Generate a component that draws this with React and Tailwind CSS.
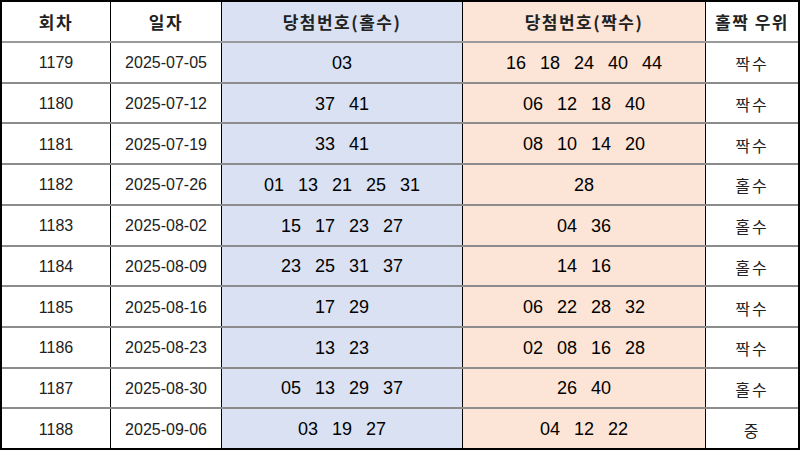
import React from 'react';

const rows = [
  { no: 1179, date: '2025-07-05', odd: ['03'], even: ['16', '18', '24', '40', '44'], win: '짝수' },
  { no: 1180, date: '2025-07-12', odd: ['37', '41'], even: ['06', '12', '18', '40'], win: '짝수' },
  { no: 1181, date: '2025-07-19', odd: ['33', '41'], even: ['08', '10', '14', '20'], win: '짝수' },
  { no: 1182, date: '2025-07-26', odd: ['01', '13', '21', '25', '31'], even: ['28'], win: '홀수' },
  { no: 1183, date: '2025-08-02', odd: ['15', '17', '23', '27'], even: ['04', '36'], win: '홀수' },
  { no: 1184, date: '2025-08-09', odd: ['23', '25', '31', '37'], even: ['14', '16'], win: '홀수' },
  { no: 1185, date: '2025-08-16', odd: ['17', '29'], even: ['06', '22', '28', '32'], win: '짝수' },
  { no: 1186, date: '2025-08-23', odd: ['13', '23'], even: ['02', '08', '16', '28'], win: '짝수' },
  { no: 1187, date: '2025-08-30', odd: ['05', '13', '29', '37'], even: ['26', '40'], win: '홀수' },
  { no: 1188, date: '2025-09-06', odd: ['03', '19', '27'], even: ['04', '12', '22'], win: '중' },
];

const kr = { fontFamily: '"Noto Sans CJK KR", "Noto Sans", sans-serif' };
const num = { fontFamily: '"Liberation Sans", Arial, sans-serif' };

const Numbers = ({ list }) => (
  <div className="flex items-center justify-center gap-[14px] text-[18px] text-black" style={num}>
    {list.map((n, i) => (
      <span key={i}>{n}</span>
    ))}
  </div>
);

export default function App() {
  return (
    <div className="w-[800px] h-[450px] bg-white overflow-hidden">
      <div className="w-[800px] h-[450px] border-2 border-black flex flex-col">
        {/* header */}
        <div
          className="flex h-[41px] shrink-0 border-b-2 border-[#9a9a9a] text-[17px] font-bold text-[#222] tracking-[1.5px]"
          style={kr}
        >
          <div className="w-[109px] flex items-center justify-center border-r border-black">회차</div>
          <div className="w-[111px] flex items-center justify-center border-r border-black">일자</div>
          <div className="w-[241px] flex items-center justify-center border-r border-black bg-[#d9e1f2]">당첨번호(홀수)</div>
          <div className="w-[243px] flex items-center justify-center border-r border-black bg-[#fce4d6]">당첨번호(짝수)</div>
          <div className="flex-1 flex items-center justify-center">홀짝 우위</div>
        </div>

        {rows.map((r, i) => (
          <div
            key={r.no}
            className={
              i === rows.length - 1
                ? 'flex flex-1 min-h-0'
                : 'flex flex-1 min-h-0 border-b-2 border-[#8c8c8c]'
            }
          >
            <div className="w-[109px] flex items-center justify-center pt-[2px] border-r border-black text-[16px] text-[#222]" style={num}>
              {r.no}
            </div>
            <div className="w-[111px] flex items-center justify-center pt-[2px] border-r border-black text-[16px] text-[#222]" style={num}>
              {r.date}
            </div>
            <div className="w-[241px] flex items-center justify-center pt-[2px] border-r border-black bg-[#d9e1f2]">
              <Numbers list={r.odd} />
            </div>
            <div className="w-[243px] flex items-center justify-center pt-[2px] border-r border-black bg-[#fce4d6]">
              <Numbers list={r.even} />
            </div>
            <div className="flex-1 flex items-center justify-center pt-[2px] text-[16px] text-[#222] tracking-[2px]" style={kr}>
              {r.win}
            </div>
          </div>
        ))}
      </div>
    </div>
  );
}
